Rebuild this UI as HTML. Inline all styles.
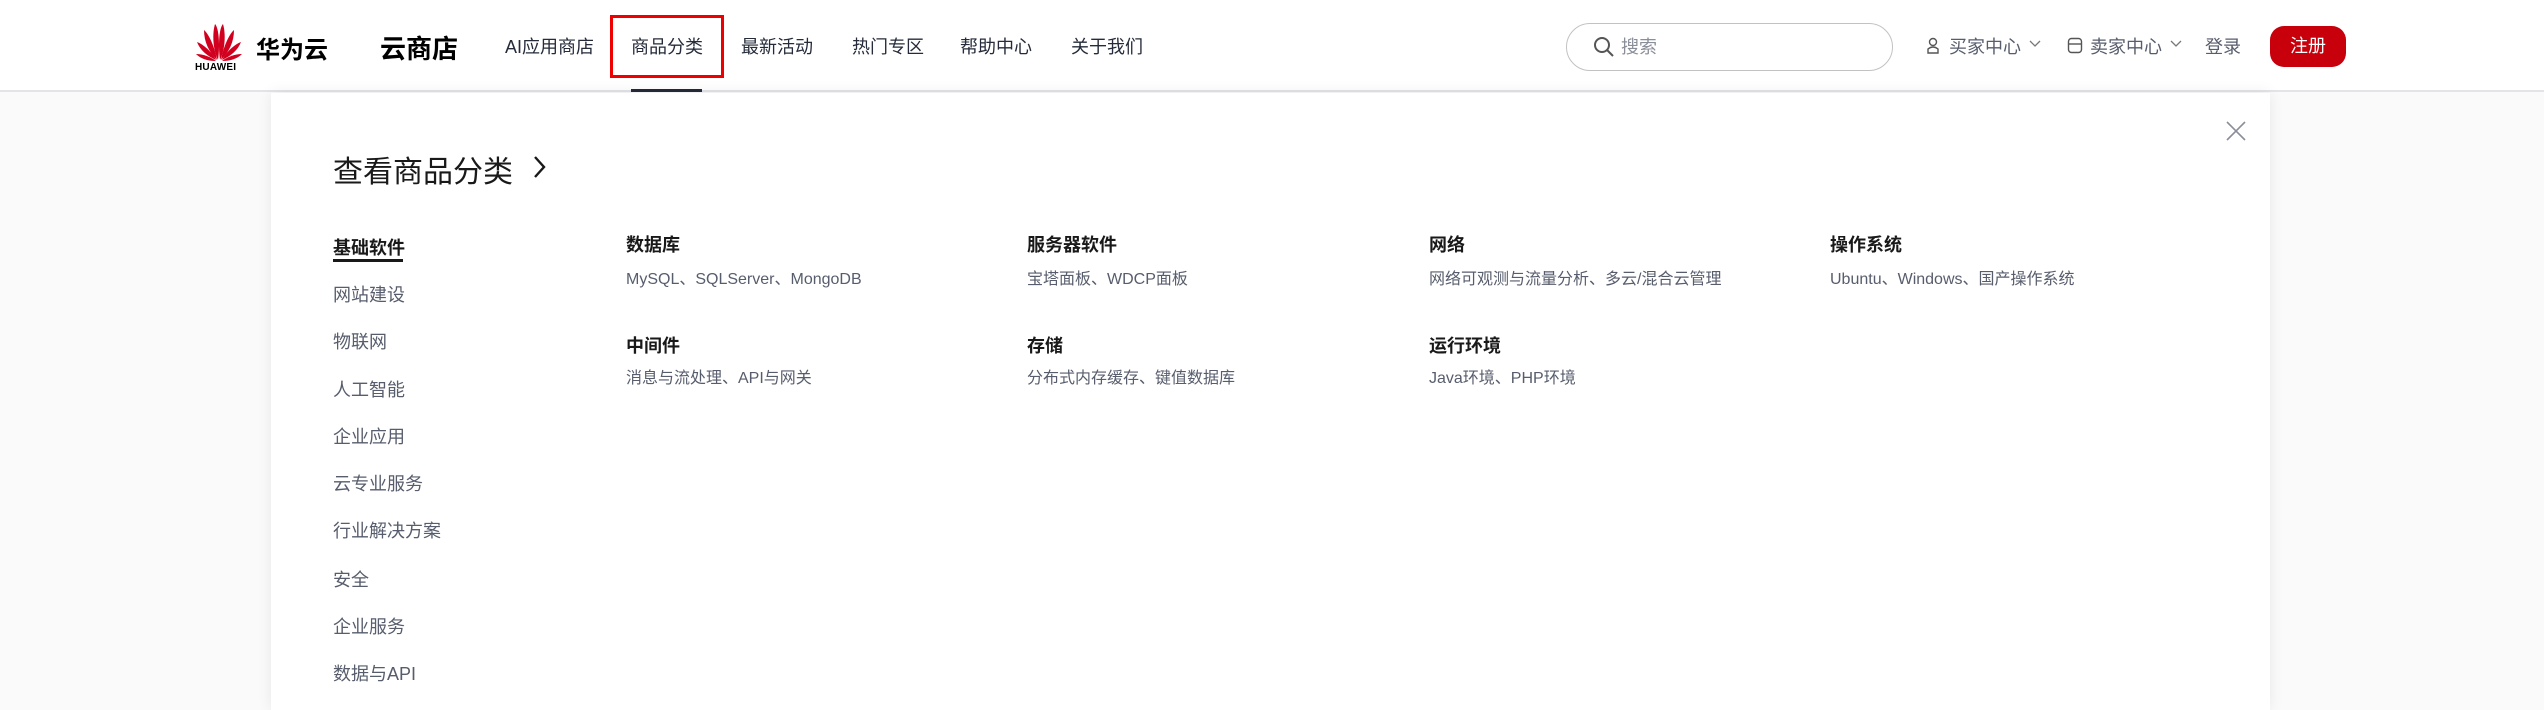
<!DOCTYPE html>
<html><head><meta charset="utf-8"><style>
*{margin:0;padding:0;box-sizing:border-box}
body{width:2544px;height:710px;overflow:hidden;background:#fafafa;font-family:"Liberation Sans","Noto Sans CJK SC",sans-serif;position:relative;color:#252b3a}
.hdr{position:absolute;left:0;top:0;width:2544px;height:92px;background:#fff;border-bottom:2px solid #e2e4ea}
.a{position:absolute;white-space:nowrap}
.nav{font-size:18px;color:#252b3a;top:33px}
.panel{position:absolute;left:271px;top:93px;width:1999px;height:617px;background:#fff;box-shadow:0 0 14px rgba(0,0,0,.08)}
.li{position:absolute;left:333px;font-size:18px;color:#575d6c}
.t{font-size:18px;font-weight:bold;color:#191919}
.d{font-size:16px;color:#575d6c}
</style></head><body>
<div class="hdr">
<svg class="a" style="left:195px;top:20px" width="48" height="44" viewBox="0 0 48 44">
<g fill="#d2001f">
<path d="M23 40 C18 30 17 14 20 4 C24 8 25 26 23 40z"/>
<path d="M25 40 C30 30 31 14 28 4 C24 8 23 26 25 40z"/>
<path d="M22 40 C14 32 9 22 9 10 C14 14 20 28 22 40z"/>
<path d="M26 40 C34 32 39 22 39 10 C34 14 28 28 26 40z"/>
<path d="M21 40 C12 36 5 30 2 22 C8 24 17 32 21 40z"/>
<path d="M27 40 C36 36 43 30 46 22 C40 24 31 32 27 40z"/>
<path d="M21 41 C13 41 6 39 1 34 C8 34 16 37 21 41z"/>
<path d="M27 41 C35 41 42 39 47 34 C40 34 32 37 27 41z"/>
</g></svg>
<div class="a" style="left:195px;top:62px;font-size:10px;font-weight:bold;letter-spacing:0.2px;color:#000">HUAWEI</div>
<div class="a" style="left:256px;top:30px;font-size:24px;font-weight:bold;color:#000">华为云</div>
<div class="a" style="left:380px;top:29px;font-size:26px;font-weight:bold;color:#000">云商店</div>
<div class="a nav" style="left:505px">AI应用商店</div>
<div class="a" style="left:610px;top:15px;width:114px;height:63px;border:3px solid #ef0000"></div>
<div class="a nav" style="left:631px">商品分类</div>
<div class="a" style="left:631px;top:89px;width:71px;height:3px;background:#252b3a"></div>
<div class="a nav" style="left:741px">最新活动</div>
<div class="a nav" style="left:852px">热门专区</div>
<div class="a nav" style="left:960px">帮助中心</div>
<div class="a nav" style="left:1071px">关于我们</div>
<div class="a" style="left:1566px;top:23px;width:327px;height:48px;border:1px solid #c2c2c2;border-radius:24px"></div>
<svg class="a" style="left:1593px;top:36px" width="22" height="22" viewBox="0 0 22 22"><circle cx="9" cy="9" r="7" fill="none" stroke="#555" stroke-width="2"/><path d="M14 14l6 6" stroke="#555" stroke-width="2"/></svg>
<div class="a" style="left:1621px;top:33px;font-size:18px;color:#8a8e99">搜索</div>
<svg class="a" style="left:1926px;top:37px" width="14" height="18" viewBox="0 0 14 18"><circle cx="7" cy="5" r="3.5" fill="none" stroke="#555" stroke-width="1.4"/><path d="M2 16v-4q5-4 10 0v4z" fill="none" stroke="#555" stroke-width="1.4"/></svg>
<div class="a nav" style="left:1949px;color:#575d6c">买家中心</div>
<svg class="a" style="left:2029px;top:40px" width="12" height="8"><path d="M1 1l5 5 5-5" fill="none" stroke="#777" stroke-width="1.3"/></svg>
<svg class="a" style="left:2067px;top:37px" width="16" height="17" viewBox="0 0 16 17"><rect x="1.5" y="1.5" width="13" height="14" rx="3" fill="none" stroke="#555" stroke-width="1.4"/><path d="M1.5 7h13" stroke="#555" stroke-width="1.4"/></svg>
<div class="a nav" style="left:2090px;color:#575d6c">卖家中心</div>
<svg class="a" style="left:2170px;top:40px" width="12" height="8"><path d="M1 1l5 5 5-5" fill="none" stroke="#777" stroke-width="1.3"/></svg>
<div class="a nav" style="left:2205px;color:#575d6c">登录</div>
<div class="a" style="left:2270px;top:26px;width:76px;height:41px;background:#c7000b;border-radius:14px;color:#fff;font-size:18px;text-align:center;line-height:41px">注册</div>
</div>
<div class="panel"></div>
<svg class="a" style="left:2226px;top:121px" width="20" height="20"><path d="M1 1l18 18M19 1L1 19" stroke="#8a8e99" stroke-width="1.6"/></svg>
<div class="a" style="left:333px;top:147px;font-size:30px;color:#191919">查看商品分类</div>
<svg class="a" style="left:533px;top:155px" width="14" height="24"><path d="M2 2l9 10-9 10" fill="none" stroke="#191919" stroke-width="2.4"/></svg>
<div class="li" style="top:234px;font-weight:bold;color:#191919">基础软件</div>
<div class="a" style="left:333px;top:259px;width:70px;height:3px;background:#191919"></div>
<div class="li" style="top:281px">网站建设</div>
<div class="li" style="top:328px">物联网</div>
<div class="li" style="top:376px">人工智能</div>
<div class="li" style="top:423px">企业应用</div>
<div class="li" style="top:470px">云专业服务</div>
<div class="li" style="top:517px">行业解决方案</div>
<div class="li" style="top:566px">安全</div>
<div class="li" style="top:613px">企业服务</div>
<div class="li" style="top:660px">数据与API</div>
<div class="a t" style="left:626px;top:231px">数据库</div>
<div class="a d" style="left:626px;top:265px">MySQL、SQLServer、MongoDB</div>
<div class="a t" style="left:1027px;top:231px">服务器软件</div>
<div class="a d" style="left:1027px;top:265px">宝塔面板、WDCP面板</div>
<div class="a t" style="left:1429px;top:231px">网络</div>
<div class="a d" style="left:1429px;top:265px">网络可观测与流量分析、多云/混合云管理</div>
<div class="a t" style="left:1830px;top:231px">操作系统</div>
<div class="a d" style="left:1830px;top:265px">Ubuntu、Windows、国产操作系统</div>
<div class="a t" style="left:626px;top:332px">中间件</div>
<div class="a d" style="left:626px;top:364px">消息与流处理、API与网关</div>
<div class="a t" style="left:1027px;top:332px">存储</div>
<div class="a d" style="left:1027px;top:364px">分布式内存缓存、键值数据库</div>
<div class="a t" style="left:1429px;top:332px">运行环境</div>
<div class="a d" style="left:1429px;top:364px">Java环境、PHP环境</div>
</body></html>
